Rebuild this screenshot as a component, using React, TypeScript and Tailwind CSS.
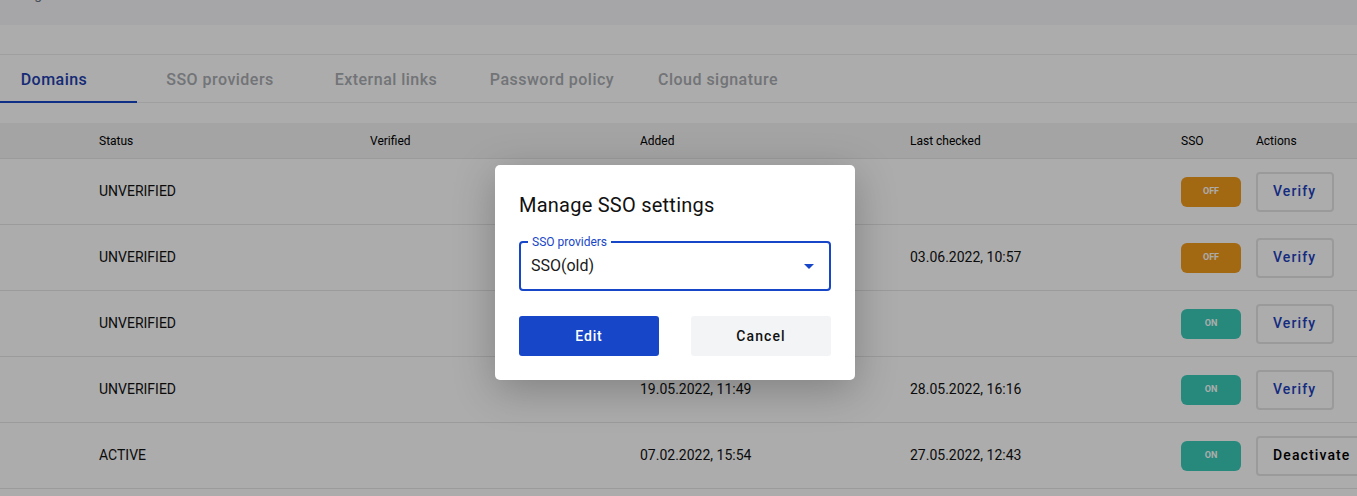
import React from 'react';

type Row = {
  status: string;
  added: string;
  checked: string;
  sso: boolean;
  action: 'Verify' | 'Deactivate';
};

const rows: Row[] = [
  { status: 'UNVERIFIED', added: '', checked: '', sso: false, action: 'Verify' },
  { status: 'UNVERIFIED', added: '', checked: '03.06.2022, 10:57', sso: false, action: 'Verify' },
  { status: 'UNVERIFIED', added: '', checked: '', sso: true, action: 'Verify' },
  { status: 'UNVERIFIED', added: '19.05.2022, 11:49', checked: '28.05.2022, 16:16', sso: true, action: 'Verify' },
  { status: 'ACTIVE', added: '07.02.2022, 15:54', checked: '27.05.2022, 12:43', sso: true, action: 'Deactivate' },
];

const tabs = ['Domains', 'SSO providers', 'External links', 'Password policy', 'Cloud signature'];

const App: React.FC = () => {
  return (
    <div className="relative h-[496px] w-[1357px] overflow-hidden bg-white font-['Roboto',sans-serif] text-[#1a1a1a]">
      {/* Top bar (mostly scrolled out) */}
      <div className="h-[25px] bg-[#f6f6f9] overflow-hidden">
        <div className="-mt-[15px] pl-[20px] text-[14px] leading-[18px] text-[#6b7280]">Organization</div>
      </div>
      <div className="h-[30px] border-b border-[#ececec]" />

      {/* Tabs */}
      <div className="flex h-[48px] border-b border-[#ececec] -ml-[29px] pt-[2px]">
        {tabs.map((t, i) => (
          <div
            key={t}
            className={`relative flex w-[166px] shrink-0 items-center justify-center text-[16px] font-medium tracking-[0.03em] ${
              i === 0 ? 'text-[#1e40af]' : 'text-[#a9acb1]'
            }`}
          >
            {t}
            {i === 0 && <div className="absolute bottom-[-1px] left-0 right-0 h-[2px] bg-[#1746c8]" />}
          </div>
        ))}
      </div>

      <div className="h-[20px]" />

      {/* Table header */}
      <div className="flex h-[36px] items-center border-b border-[#e6e6e6] bg-[#f3f3f3] text-[12px] text-black">
        <div className="w-[99px] shrink-0" />
        <div className="w-[271px] shrink-0">Status</div>
        <div className="w-[270px] shrink-0">Verified</div>
        <div className="w-[270px] shrink-0">Added</div>
        <div className="w-[271px] shrink-0">Last checked</div>
        <div className="w-[75px] shrink-0">SSO</div>
        <div className="shrink-0">Actions</div>
      </div>

      {/* Table rows */}
      {rows.map((r, i) => (
        <div key={i} className="flex h-[66px] items-center border-b border-[#e6e6e6] text-[14px] text-[#111]">
          <div className="w-[99px] shrink-0" />
          <div className="w-[271px] shrink-0">{r.status}</div>
          <div className="w-[270px] shrink-0" />
          <div className="w-[270px] shrink-0">{r.added}</div>
          <div className="w-[271px] shrink-0">{r.checked}</div>
          <div className="w-[75px] shrink-0">
            <div
              className={`flex h-[30px] w-[60px] items-center justify-center rounded-[6px] text-[9px] font-bold text-white ${
                r.sso ? 'bg-[#39ccb7]' : 'bg-[#f29b1b]'
              }`}
            >
              {r.sso ? 'ON' : 'OFF'}
            </div>
          </div>
          <div
            className={`flex h-[40px] shrink-0 items-center rounded-[4px] border-2 border-[#e4e4e4] px-[15px] text-[14px] font-medium tracking-[0.08em] ${
              r.action === 'Verify' ? 'w-[78px] text-[#2140bd]' : 'w-[120px] text-black'
            }`}
          >
            {r.action}
          </div>
        </div>
      ))}

      {/* Backdrop */}
      <div className="absolute inset-0 bg-black/[0.325]" />

      {/* Modal */}
      <div className="absolute left-[495px] top-[165px] w-[360px] rounded-[5px] bg-white px-[24px] pt-[27px] pb-[24px] shadow-[0_10px_40px_rgba(0,0,0,0.25)]">
        <h2 className="text-[20px] leading-[26px] font-normal tracking-[0.012em] text-[#111]">Manage SSO settings</h2>
        <div className="relative mt-[23px] flex h-[50px] items-center rounded-[4px] border-2 border-[#1746c8] pl-[10px] pr-[12px]">
          <span className="absolute -top-[8px] left-[7px] bg-white px-[4px] text-[12px] leading-[14px] text-[#1746c8]">
            SSO providers
          </span>
          <span className="flex-1 text-[16px] text-[#1a1a1a]">SSO(old)</span>
          <svg width="10" height="5" viewBox="0 0 10 5" className="mr-[3px]">
            <path d="M0 0 L10 0 L5 5 z" fill="#1746c8" />
          </svg>
        </div>
        <div className="mt-[25px] flex justify-between">
          <button className="h-[40px] w-[140px] rounded-[3px] bg-[#1746c8] text-[14px] font-medium tracking-[0.06em] text-white">
            Edit
          </button>
          <button className="h-[40px] w-[140px] rounded-[3px] bg-[#f3f4f6] text-[14px] font-medium tracking-[0.08em] text-[#111]">
            Cancel
          </button>
        </div>
      </div>
    </div>
  );
};

export default App;
